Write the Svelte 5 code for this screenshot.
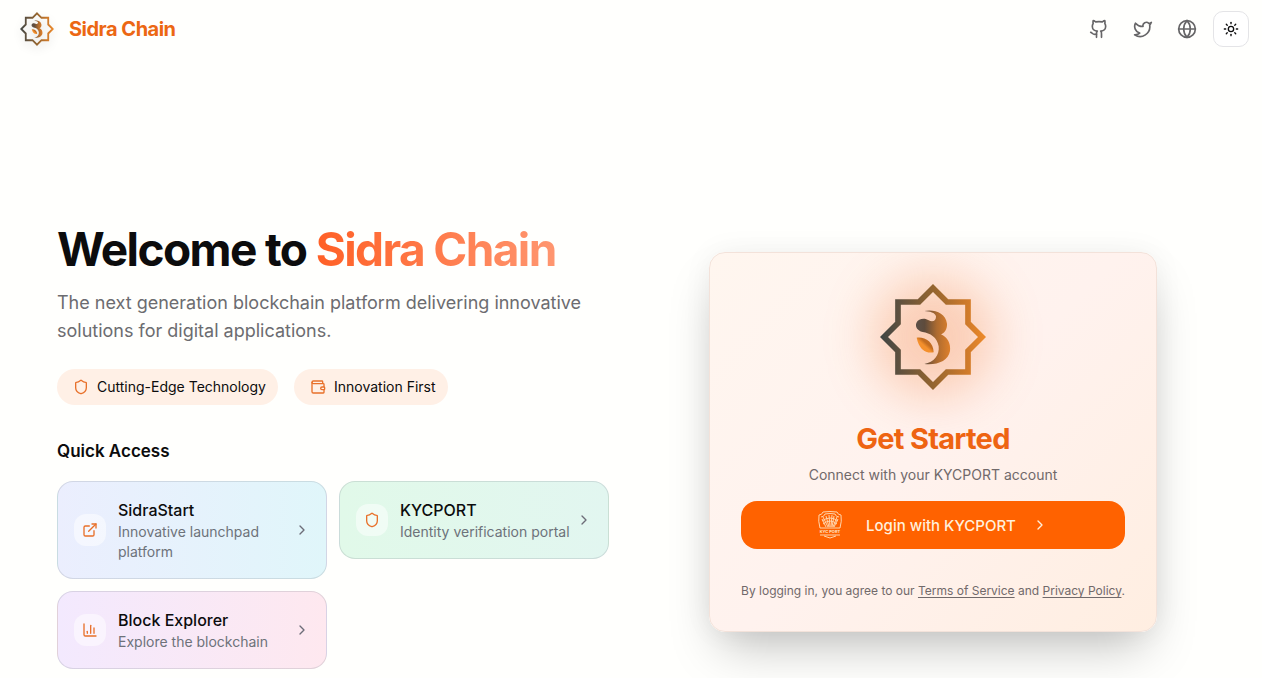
<script>
  const badges = [
    { label: 'Cutting-Edge Technology', icon: 'shield' },
    { label: 'Innovation First', icon: 'wallet' },
  ]

  const links = [
    { title: 'SidraStart', text: 'Innovative launchpad platform', icon: 'external', tone: 'blue' },
    { title: 'KYCPORT', text: 'Identity verification portal', icon: 'shield', tone: 'green' },
    { title: 'Block Explorer', text: 'Explore the blockchain', icon: 'chart', tone: 'purple' },
  ]

  const socials = [
    { label: 'GitHub', icon: 'github' },
    { label: 'Twitter', icon: 'twitter' },
    { label: 'Website', icon: 'globe' },
  ]

  const icons = {
    github: [
      'M15 22v-4a4.8 4.8 0 0 0-1-3.5c3 0 6-2 6-5.5.08-1.25-.27-2.48-1-3.5.28-1.15.28-2.35 0-3.5 0 0-1 0-3 1.5-2.64-.5-5.36-.5-8 0C6 2 5 2 5 2c-.3 1.15-.3 2.35 0 3.5A5.403 5.403 0 0 0 4 9c0 3.5 3 5.5 6 5.5-.39.49-.68 1.05-.85 1.65-.17.6-.22 1.23-.15 1.85v4',
      'M9 18c-4.51 2-5-2-7-2',
    ],
    twitter: [
      'M22 4s-.7 2.1-2 3.4c1.6 10-9.4 17.3-18 11.6 2.2.1 4.4-.6 6-2C3 15.5.5 9.6 3 5c2.2 2.6 5.6 4.1 9 4-.9-4.2 4-6.6 7-3.8 1.1 0 3-1.2 3-1.2z',
    ],
    globe: [
      'M22 12a10 10 0 1 1-20 0 10 10 0 0 1 20 0z',
      'M12 2a14.5 14.5 0 0 0 0 20 14.5 14.5 0 0 0 0-20',
      'M2 12h20',
    ],
    sun: [
      'M16 12a4 4 0 1 1-8 0 4 4 0 0 1 8 0z',
      'M12 2v2', 'M12 20v2', 'm4.93 4.93 1.41 1.41', 'm17.66 17.66 1.41 1.41',
      'M2 12h2', 'M20 12h2', 'm6.34 17.66-1.41 1.41', 'm19.07 4.93-1.41 1.41',
    ],
    shield: [
      'M20 13c0 5-3.5 7.5-7.66 8.95a1 1 0 0 1-.67-.01C7.5 20.5 4 18 4 13V6a1 1 0 0 1 1-1c2 0 4.5-1.2 6.24-2.72a1.17 1.17 0 0 1 1.52 0C14.51 3.81 17 5 19 5a1 1 0 0 1 1 1z',
    ],
    wallet: [
      'M19 7V4a1 1 0 0 0-1-1H5a2 2 0 0 0 0 4h15a1 1 0 0 1 1 1v4h-3a2 2 0 0 0 0 4h3a1 1 0 0 0 1-1v-2a1 1 0 0 0-1-1',
      'M3 5v14a2 2 0 0 0 2 2h15a1 1 0 0 0 1-1v-4',
    ],
    external: [
      'M15 3h6v6',
      'M10 14 21 3',
      'M18 13v6a2 2 0 0 1-2 2H5a2 2 0 0 1-2-2V8a2 2 0 0 1 2-2h6',
    ],
    chart: ['M3 3v16a2 2 0 0 0 2 2h16', 'M18 17V9', 'M13 17V5', 'M8 17v-3'],
    chevron: ['m9 18 6-6-6-6'],
  }
</script>

{#snippet icon(name, size = 16)}
  <svg class="icon" width={size} height={size} viewBox="0 0 24 24" aria-hidden="true">
    {#each icons[name] as d}
      <path {d} />
    {/each}
  </svg>
{/snippet}

{#snippet logo(id, size)}
  <svg class="logo" width={size} height={size} viewBox="60 56 318 318" aria-hidden="true">
    <defs>
      <linearGradient id="{id}-star" gradientUnits="userSpaceOnUse" x1="60" y1="0" x2="378" y2="0">
        <stop offset="0" stop-color="#3d4443" />
        <stop offset="0.2" stop-color="#62523e" />
        <stop offset="0.5" stop-color="#94652f" />
        <stop offset="0.8" stop-color="#cb792b" />
        <stop offset="1" stop-color="#ee8a2a" />
      </linearGradient>
      <linearGradient id="{id}-body" gradientUnits="userSpaceOnUse" x1="168" y1="0" x2="272" y2="0">
        <stop offset="0" stop-color="#5c5149" />
        <stop offset="0.25" stop-color="#5e4b3c" />
        <stop offset="0.6" stop-color="#ad6b30" />
        <stop offset="1" stop-color="#e0812b" />
      </linearGradient>
      <linearGradient id="{id}-leaf" x1="0" y1="1" x2="1" y2="0">
        <stop offset="0.45" stop-color="#f4902c" />
        <stop offset="0.6" stop-color="#c26c20" />
      </linearGradient>
    </defs>
    <polygon
      points="219,68 261,110 324,110 324,173 366,215 324,257 324,320 261,320 219,362 177,320 114,320 114,257 72,215 114,173 114,110 177,110"
      fill="none" stroke="url(#{id}-star)" stroke-width="17" />
    <path
      d="M193 137C222 131 257 142 261 175C262 192 253 203 243 207C262 215 273 235 270 257C265 287 232 300 193 296C222 291 239 270 236 243C232 216 210 203 188 200C172 196 165 185 169 173C175 159 195 157 206 165C218 172 229 166 228 153C225 142 210 138 193 137Z"
      fill="url(#{id}-body)" />
    <path d="M170 217C196 214 220 230 221 261C195 265 177 250 170 217Z" fill="url(#{id}-leaf)" />
  </svg>
{/snippet}

<div class="page">
  <header>
    <a class="brand" href="#home">
      {@render logo('brand', 34)}
      <span>Sidra Chain</span>
    </a>
    <nav>
      {#each socials as s}
        <a class="social" href="#{s.icon}" aria-label={s.label}>{@render icon(s.icon, 20)}</a>
      {/each}
      <button class="theme" aria-label="Toggle theme">{@render icon('sun')}</button>
    </nav>
  </header>

  <main>
    <section class="intro">
      <h1>Welcome to <span>Sidra Chain</span></h1>
      <p class="lead">The next generation blockchain platform delivering innovative solutions for digital applications.</p>
      <div class="badges">
        {#each badges as b}
          <div class="badge">{@render icon(b.icon)}<span>{b.label}</span></div>
        {/each}
      </div>
      <h2>Quick Access</h2>
      <div class="links">
        {#each links as l}
          <a class="link {l.tone}" href="#{l.title}">
            <span class="link-icon">{@render icon(l.icon)}</span>
            <span class="link-body">
              <span class="link-title">{l.title}</span>
              <span class="link-text">{l.text}</span>
            </span>
            {@render icon('chevron')}
          </a>
        {/each}
      </div>
    </section>

    <section class="login">
      <div class="card">
        <div class="glow">{@render logo('card', 106)}</div>
        <h3>Get Started</h3>
        <p class="sub">Connect with your KYCPORT account</p>
        <button class="btn-login">
          <svg class="kyc" width="24" height="28" viewBox="0 0 24 28" aria-hidden="true">
            <path d="M1 4Q4 4 5 1Q12 0 19 1Q20 4 23 4Q24 10 22 17H2Q0 10 1 4Z" />
            <path d="M3 6Q6 6 7 3Q12 2 17 3Q18 6 21 6" />
            <path d="M4 8L8 16M5 6L10 16M8 5L11 16M11 4L12 16M14 4L13 16M16 5L14 16M19 6L15 16M20 8L16 16" />
            <path d="M4 10Q12 4 20 10M5 13Q12 7 19 13" />
            <text x="12" y="22" text-anchor="middle">KYC PORT</text>
            <path d="M2 24H22M6 25L12 27L18 25" />
          </svg>
          <span>Login with KYCPORT</span>
          {@render icon('chevron')}
        </button>
        <p class="terms">
          By logging in, you agree to our <a href="#terms">Terms of Service</a> and <a href="#privacy">Privacy Policy</a>.
        </p>
      </div>
    </section>
  </main>
</div>

<style>
  :global(body) { background: #fffffd; }
  .page {
    min-height: 100vh; overflow: hidden; box-sizing: border-box;
    font-family: Inter, "Liberation Sans", sans-serif; color: #0c0c0d;
  }
  h1, h2, h3, p { margin: 0; }
  a { color: inherit; text-decoration: none; }
  button { font-family: inherit; cursor: pointer; padding: 0; }
  .icon {
    fill: none; stroke: currentColor; stroke-width: 2;
    stroke-linecap: round; stroke-linejoin: round; flex-shrink: 0;
  }
  .logo { display: block; flex-shrink: 0; }

  header {
    display: flex; align-items: center; justify-content: space-between;
    padding: 11px 13px 11px 20px;
  }
  .brand {
    display: flex; align-items: center; gap: 15px;
    font-size: 20px; line-height: 28px; font-weight: 700; color: #ec6713;
  }
  .brand .logo { filter: drop-shadow(0 4px 4px rgba(0,0,0,0.12)); }
  .brand span { letter-spacing: -0.025em; }
  nav { display: flex; align-items: center; gap: 8px; }
  .social, .theme {
    width: 36px; height: 36px; box-sizing: border-box;
    display: flex; align-items: center; justify-content: center;
  }
  .social { color: #666567; }
  .theme { background: #fff; border: 1px solid #e4e4e7; border-radius: 10px; color: #0c0c0d; }

  main {
    display: grid; grid-template-columns: 1fr 1fr; gap: 48px; align-items: center;
    max-width: 1152px; margin: 0 auto; padding: 167px 53px 9px 57px;
  }
  h1 { font-size: 46px; line-height: 48px; font-weight: 700; letter-spacing: -0.035em; }
  h1 span {
    background: linear-gradient(90deg, #ff6026, #ff9670);
    background-clip: text; -webkit-background-clip: text; color: transparent;
  }
  .lead { margin-top: 16px; font-size: 18px; line-height: 28px; color: #6c6c70; }
  .badges { display: flex; flex-wrap: wrap; gap: 16px; margin-top: 24px; }
  .badge {
    display: flex; align-items: center; gap: 8px; padding: 8px 12px 8px 16px;
    border-radius: 18px; background: #fff0e6; font-size: 14px; line-height: 20px;
  }
  .badge .icon, .link-icon { color: #e8702a; }
  h2 { margin-top: 32px; font-size: 17px; line-height: 28px; font-weight: 600; }
  .links {
    display: grid; grid-template-columns: 1fr 1fr; gap: 12px;
    align-items: start; margin-top: 16px;
  }
  .link {
    display: flex; align-items: center; gap: 4px; padding: 16px;
    border: 1px solid rgba(110,120,130,0.2); border-radius: 16px;
  }
  .link > .icon { color: #6c6c78; }
  .blue { background: linear-gradient(90deg, #ebeefe, #e0f6fa); }
  .green { background: linear-gradient(90deg, #e1f9e9, #e2f6f0); }
  .purple { background: linear-gradient(90deg, #f3e9fe, #fee8ef); }
  .link-icon {
    width: 32px; height: 32px; margin-right: 8px; border-radius: 12px;
    background: rgba(255,255,255,0.5);
    display: flex; align-items: center; justify-content: center; flex-shrink: 0;
  }
  .link-body { flex: 1; min-width: 0; display: flex; flex-direction: column; }
  .link-title { font-size: 16px; line-height: 24px; font-weight: 500; }
  .link-text { font-size: 14px; line-height: 20px; color: #6d727a; }

  .login { display: flex; justify-content: center; padding-bottom: 10px; }
  .card {
    width: 100%; max-width: 448px; box-sizing: border-box; padding: 31px 31px 32px;
    border: 1px solid #f3e2da; border-radius: 16px; overflow: hidden;
    background: linear-gradient(135deg, #fff6ef, #fff2ee 50%, #ffeee1);
    box-shadow: 0 25px 50px -12px rgba(0,0,0,0.25), 0 0 30px rgba(0,0,0,0.05);
    display: flex; flex-direction: column; align-items: center;
  }
  .glow { position: relative; }
  .glow::before {
    content: ''; position: absolute; inset: -8px; border-radius: 50%;
    background: rgba(240,100,20,0.26); filter: blur(24px);
  }
  .glow .logo { position: relative; }
  h3 {
    margin-top: 31px; font-size: 29px; line-height: 36px; font-weight: 700;
    letter-spacing: -0.025em; color: #ee6412;
  }
  .sub { margin-top: 8px; font-size: 14px; line-height: 20px; color: #71696a; }
  .btn-login {
    display: flex; align-items: center; justify-content: center; gap: 16px;
    width: 100%; height: 48px; margin-top: 16px; border: none; border-radius: 16px;
    background: #ff6200; color: #fff0dc; font-size: 15px; font-weight: 500;
  }
  .kyc { fill: none; stroke: #ffd5ac; margin-right: 8px; flex-shrink: 0; }
  .kyc text { font-size: 4px; font-weight: 700; fill: #ffe4c8; stroke: none; }
  .terms { margin-top: 34px; font-size: 12px; line-height: 16px; color: #71696a; }
  .terms a { text-decoration: underline; text-underline-offset: 2px; }

  @media (max-width: 900px) {
    main { grid-template-columns: 1fr; padding: 48px 24px; }
  }
</style>
